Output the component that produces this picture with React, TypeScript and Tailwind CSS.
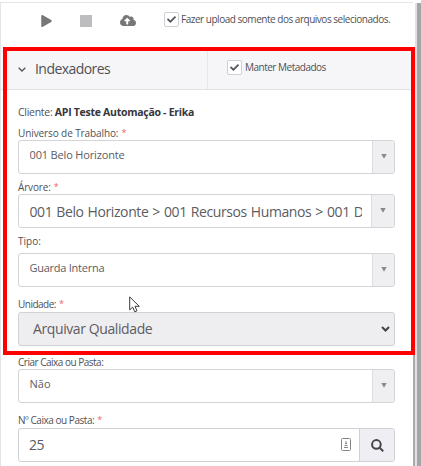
import type { ReactNode } from "react";
import { FaPlay, FaCloudUploadAlt, FaCheck } from "react-icons/fa";

function Check({ children, className }: { children: ReactNode; className: string }) {
  return (
    <label className={`flex items-start ${className}`}>
      <span className="flex h-[15px] w-[15px] shrink-0 items-center justify-center rounded-[2px] border border-[#cfcfd4] bg-white">
        <FaCheck className="h-[9px] w-[9px] text-[#55555a]" />
      </span>
      {children}
    </label>
  );
}

function Label({ children, required, className }: { children: ReactNode; required?: boolean; className: string }) {
  return (
    <div className={`flex items-end whitespace-nowrap leading-[14px] ${className}`}>
      <span>{children}</span>
      {required && <span className="ml-[3px] text-[9px] text-[#f06060]">*</span>}
    </div>
  );
}

function Select({ children, large = false }: { children: ReactNode; large?: boolean }) {
  return (
    <div className="flex h-[34px] overflow-hidden rounded-[3px] border border-[#d3d3d8] bg-white text-[#5c5c62]">
      <div className="min-w-0 flex-1 pl-[10.5px] pr-[9px]">
        <div className="overflow-hidden whitespace-nowrap">{children}</div>
      </div>
      <div className={`flex shrink-0 justify-center border-l border-[#dcdce0] bg-[#efeff1] pt-[13px] ${large ? "w-[23px]" : "w-[22px]"}`}>
        <svg className="h-[5px] w-[6px]" viewBox="0 0 6 5">
          <path d="M.3 0h5.4L3 4.8z" fill="#88888c" />
        </svg>
      </div>
    </div>
  );
}

export default function App() {
  return (
    <div className="relative flex h-[466px] w-[421px] overflow-hidden bg-white pt-[2px] font-['Open_Sans','Noto_Sans',sans-serif] text-[#505056]">
      <main className="flex w-[413px] shrink-0 flex-col border-l border-t border-[#e4e4e8]">
        <div className="flex h-[47px] shrink-0 text-[#77777a]">
          <FaPlay className="ml-[40px] mt-[12px] h-[12px] w-[11px]" />
          <svg className="ml-[28px] mt-[12px] h-[12px] w-[12px]" viewBox="0 0 12 12">
            <rect width="12" height="12" fill="#bdbdbf" />
          </svg>
          <FaCloudUploadAlt className="ml-[28px] mt-[11px] h-[13px] w-[16px]" />
          <Check className="ml-[28px] mt-[9px]">
            <span className="ml-[2px] whitespace-nowrap text-[10px] leading-[15px] tracking-[-0.48px] text-[#505056]">Fazer upload somente dos arquivos selecionados.</span>
          </Check>
        </div>
        <header className="flex h-[40px] shrink-0 border-b border-[#e3e3e7] bg-[#f6f6f8]">
          <div className="flex w-[207px] border-r border-[#e6e6ea]">
            <svg className="ml-[17px] mt-[17px] h-[5px] w-[8px]" viewBox="0 0 8 5" fill="none" stroke="#55555a" strokeWidth="1.3">
              <path d="M.7.7 4 4 7.3.7" />
            </svg>
            <span className="ml-[9px] mt-[9px] text-[14px] leading-[20px] tracking-[-0.55px]">Indexadores</span>
          </div>
          <Check className="ml-[19px] mt-[10px]">
            <span className="ml-[3px] whitespace-nowrap text-[10px] leading-[15px] tracking-[-0.5px]">Manter Metadados</span>
          </Check>
        </header>
        <section className="flex w-[394px] flex-col pl-[17px] text-[10px]">
          <div className="mt-[14px] h-[16px] whitespace-nowrap text-[10.5px] leading-[16px] tracking-[-0.28px]">
            Cliente: <b className="font-bold text-[#36363c]">API Teste Automação - Erika</b>
          </div>
          <Label required className="h-[20px] tracking-[-0.1px]">Universo de Trabalho:</Label>
          <Select><span className="block pt-[5px] text-[11px] leading-[17px] tracking-[-0.16px]">001 Belo Horizonte</span></Select>
          <Label required className="h-[20px] tracking-[-0.15px]">Árvore:</Label>
          <Select large><span className="block pt-[7px] text-[14px] leading-[20px] tracking-[-0.4px] [word-spacing:0.75px]">001 Belo Horizonte &gt; 001 Recursos Humanos &gt; 001 De</span></Select>
          <Label className="h-[25px] pb-[5px]">Tipo:</Label>
          <Select><span className="block pt-[6px] text-[11px] leading-[16px] tracking-[-0.25px]">Guarda Interna</span></Select>
          <Label required className="h-[25px] pb-[1px] tracking-[-0.5px]">Unidade:</Label>
          <div className="flex h-[34px] items-center justify-between rounded-[3px] border border-[#d0d0d5] bg-[#eeeef0] pl-[14px] pr-[4px]">
            <span className="text-[14px] leading-[20px] tracking-[-0.4px] text-[#5c5c62]">Arquivar Qualidade</span>
            <svg className="h-[6px] w-[9px]" viewBox="0 0 9 6" fill="none" stroke="#434348" strokeWidth="2">
              <path d="M1 1l3.5 3.5L8 1" />
            </svg>
          </div>
          <Label className="h-[23px] tracking-[-0.5px]">Criar Caixa ou Pasta:</Label>
          <Select><span className="block pt-[6px] text-[11px] leading-[16px]">Não</span></Select>
          <Label required className="h-[25px] pb-[1px] tracking-[-0.46px]">Nº Caixa ou Pasta:</Label>
          <div className="flex h-[34px] overflow-hidden rounded-[3px] border border-[#d0d0d5] bg-white">
            <span className="flex-1 pl-[10px] pt-[6px] text-[14px] leading-[20px] tracking-[-0.5px] text-[#5c5c62]">25</span>
            <svg className="mr-[8px] mt-[9px] h-[13px] w-[10px]" viewBox="0 0 10 13" fill="none" stroke="#858589">
              <rect x=".5" y=".5" width="9" height="12" rx="1" />
              <path d="M5 3v2M4 5.5h2M3.5 7.5h3M3 9.5h4" />
            </svg>
            <div className="flex w-[35px] items-center justify-center border-l border-[#d0d0d5] bg-[#eeeef3]">
              <svg className="h-[13px] w-[13px]" viewBox="0 0 13 13" fill="none" stroke="#44444a" strokeWidth="2">
                <circle cx="5.4" cy="5.4" r="4.3" />
                <path d="M8.6 8.6l3.6 3.6" />
              </svg>
            </div>
          </div>
        </section>
      </main>
      <div className="flex w-[8px] shrink-0 pt-px">
        <div className="w-[2px] bg-white pt-[351px]"><div className="h-full bg-[#ababad]" /></div>
        <div className="w-[2px] bg-[#e2e2e4]" />
        <div className="w-[4px] bg-[#a5a5a8]" />
      </div>
      <div className="absolute left-[3px] top-[47px] h-[308px] w-[412px] border-4 border-[#ff0000]" />
      <svg className="absolute left-[129px] top-[296px] h-[17px] w-[11px]" viewBox="0 0 11 17" fill="white" stroke="#3c3c42">
        <path d="M.7.9v13l3-2.8 2 4.7 2.3-1-2-4.5h4.3z" />
      </svg>
    </div>
  );
}
